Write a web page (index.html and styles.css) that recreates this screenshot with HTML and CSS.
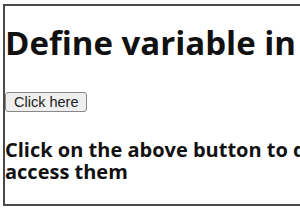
FILE: index.html
```html
<!DOCTYPE html>
<html lang="en">
<head>
    <meta charset="UTF-8">
    <meta name="viewport" content="width=device-width, initial-scale=1.0">
    <title>Define variable</title>
    <link rel="stylesheet" href="styles.css">
</head>
<body>
<div class="frame">
    <h1 class="title">Define variable in JavaScript</h1>
    <button class="click-button" onclick="showVars()">Click here</button>
    <p class="note" id="note">Click on the above button to define variables and access them</p>
</div>
</body>
</html>
```

FILE: styles.css
```css
html, body {
    overflow: hidden;
}
body {
    margin: 0;
    padding: 4px 0 0 3px;
    font-family: "Open Sans", sans-serif;
}
.frame {
    width: 700px;
    height: 202px;
    border: 2px solid #4a4a4a;
    border-right: none;
    box-sizing: border-box;
    white-space: nowrap;
}
.title {
    margin: 17px 0 29px;
    font-size: 33px;
    font-weight: bold;
    line-height: 40px;
    color: #111;
}
.click-button {
    display: block;
    height: 20px;
    padding: 0 8px;
    font-family: Arial, "Liberation Sans", sans-serif;
    font-size: 14.5px;
    color: #222;
    background-color: #efefef;
    border: 1px solid #888;
    border-radius: 3px;
}
.note {
    width: 560px;
    white-space: normal;
    margin: 27px 0 0;
    font-size: 20px;
    font-weight: bold;
    line-height: 22px;
    color: #111;
}
```
